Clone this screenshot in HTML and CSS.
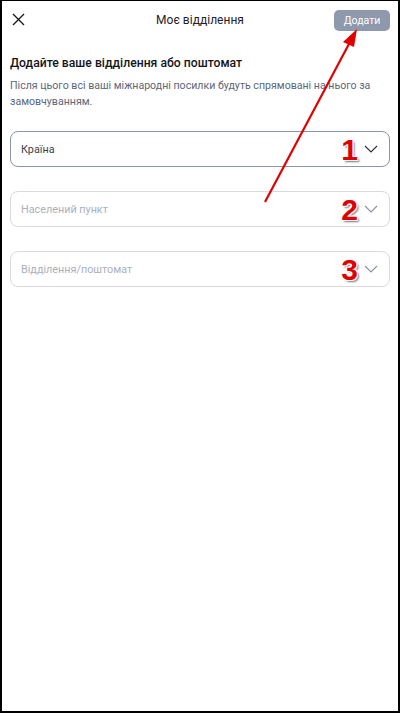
FILE: index.html
```html
<!DOCTYPE html>
<html lang="uk">
<head>
  <meta charset="UTF-8" />
  <meta name="viewport" content="width=device-width, initial-scale=1.0"/>
  <title>Моє відділення</title>
  <link rel="stylesheet" href="styles.css">
</head>
<body>
  <div class="frame">
    <header class="topbar">
      <button class="close" aria-label="Закрити">
        <svg width="13" height="13" viewBox="0 0 13 13"><path d="M1 1L12 12M12 1L1 12" stroke="#1c1c1c" stroke-width="1.4" fill="none"/></svg>
      </button>
      <div class="title">Моє відділення</div>
      <button class="add">Додати</button>
    </header>

    <main class="content">
      <h2 class="heading">Додайте ваше відділення або поштомат</h2>
      <p class="note">Після цього всі ваші міжнародні посилки будуть спрямовані на нього за замовчуванням.</p>

      <div class="fields">
        <div class="field active">
          <span class="label">Країна</span>
          <span class="mark">1</span>
          <svg class="chev" width="14" height="8" viewBox="0 0 14 8"><path d="M1 1L7 7L13 1" stroke="#2a2d36" stroke-width="1.1" fill="none"/></svg>
        </div>
        <div class="field">
          <span class="label placeholder">Населений пункт</span>
          <span class="mark">2</span>
          <svg class="chev" width="14" height="8" viewBox="0 0 14 8"><path d="M1 1L7 7L13 1" stroke="#8a909c" stroke-width="1.1" fill="none"/></svg>
        </div>
        <div class="field">
          <span class="label placeholder">Відділення/поштомат</span>
          <span class="mark">3</span>
          <svg class="chev" width="14" height="8" viewBox="0 0 14 8"><path d="M1 1L7 7L13 1" stroke="#8a909c" stroke-width="1.1" fill="none"/></svg>
        </div>
      </div>
    </main>

    <svg class="arrow" width="400" height="713" viewBox="0 0 400 713">
      <line x1="265" y1="202" x2="350" y2="42" stroke="#e00000" stroke-width="2.2" />
      <polygon points="357,29 343,42 354,47" fill="#e00000" />
    </svg>
  </div>
</body>
</html>
```

FILE: styles.css
```css
* {
  box-sizing: border-box;
}

body {
  margin: 0;
  font-family: Roboto, "Noto Sans", sans-serif;
  background: #fff;
}

.frame {
  position: relative;
  width: 400px;
  height: 713px;
  border: 2px solid #000;
  border-top-width: 1px;
  border-right-width: 2px;
  overflow: hidden;
}

.topbar {
  display: flex;
  align-items: center;
  justify-content: space-between;
  height: 38px;
  padding: 0 8px 0 10px;
}

.close {
  border: 0;
  background: none;
  padding: 0;
  width: 14px;
  height: 14px;
  display: flex;
}

.title {
  font-size: 12px;
  color: #1f2128;
  margin-left: 40px;
}

.add {
  border: 0;
  background: #8e99ad;
  color: #fff;
  font-family: inherit;
  font-size: 10.5px;
  width: 56px;
  height: 21px;
  border-radius: 5px;
  padding: 0;
}

.content {
  padding: 0 8px;
}

.heading {
  margin: 15px 0 0;
  font-size: 12.2px;
  font-weight: 500;
  line-height: 18px;
  color: #141519;
}

.note {
  margin: 6px 0 0;
  font-size: 10.6px;
  line-height: 16px;
  color: #5d6679;
}

.fields {
  display: flex;
  flex-direction: column;
  gap: 24px;
  margin-top: 21px;
}

.field {
  position: relative;
  display: flex;
  align-items: center;
  height: 36px;
  padding: 0 11px 0 10px;
  border: 1px solid #d6dae3;
  border-radius: 8px;
}

.field.active {
  border-color: #8c95a8;
}

.label {
  flex: 1;
  font-size: 10.8px;
  color: #3a3f4b;
}

.label.placeholder {
  color: #a9afbc;
}

.chev {
  flex: none;
}

.mark {
  position: absolute;
  right: 31px;
  top: 2px;
  font-family: "Liberation Sans", Arial, sans-serif;
  font-weight: bold;
  font-size: 30px;
  line-height: 32px;
  color: #e00000;
  text-shadow: 1px 1px 0 #fff, -1px -1px 0 #fff, 1px -1px 0 #fff, -1px 1px 0 #fff, 2px 2px 2px #777;
}

.arrow {
  position: absolute;
  left: -2px;
  top: -1px;
  pointer-events: none;
}
```
